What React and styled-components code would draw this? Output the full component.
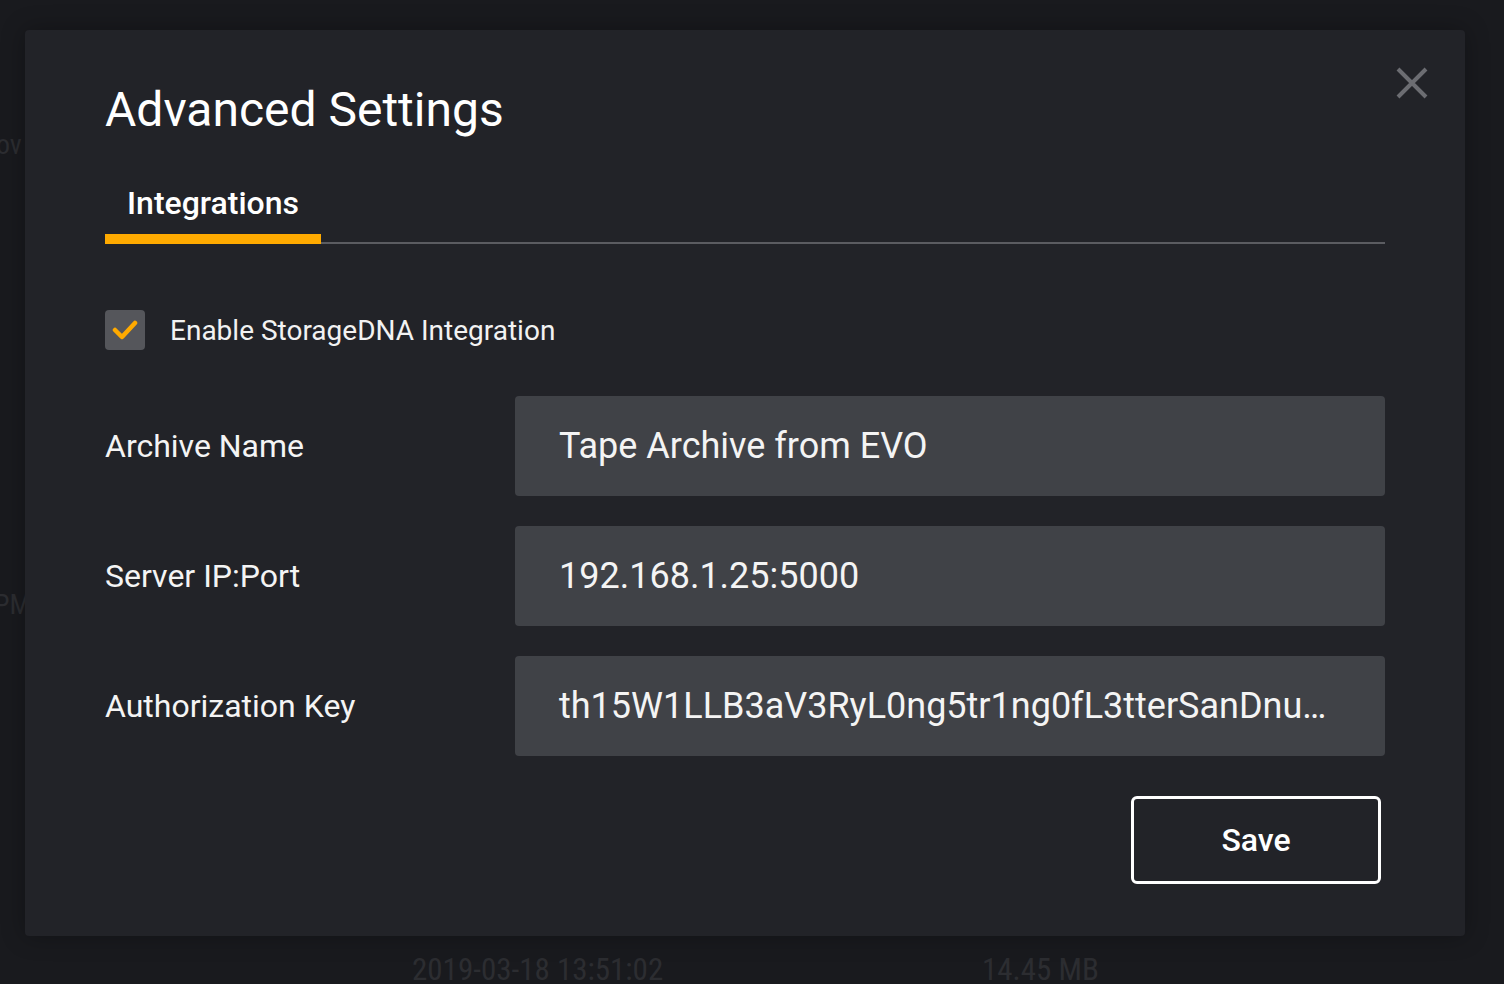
import styled, { createGlobalStyle } from "styled-components";

const Global = createGlobalStyle`
  * { box-sizing: border-box; margin: 0; padding: 0; }
  html, body { background: #191a1e; }
  body { font-family: Roboto, "Noto Sans", "Liberation Sans", sans-serif; color: #fff; }
`;

const Page = styled.div`
  position: relative;
  width: 1504px;
  height: 984px;
  overflow: hidden;
  padding: 30px 39px 48px 25px;
`;

// faint text of the page behind the dialog
const Ghost = styled.span`
  position: absolute;
  color: #2c2d31;
  font-size: ${(p) => p.size || 28}px;
  font-stretch: condensed;
  white-space: nowrap;
`;

const Modal = styled.div`
  position: relative;
  height: 100%;
  background: #222328;
  border-radius: 4px;
  padding: 52px 80px 0 80px;
  box-shadow: 0 0 24px rgba(0, 0, 0, 0.3);
`;

const Close = styled.button`
  position: absolute;
  top: 36px;
  right: 36px;
  width: 34px;
  height: 34px;
  background: none;
  border: none;
  cursor: pointer;
`;

const Title = styled.h1`
  font-size: 48px;
  font-weight: 400;
  line-height: 56px;
`;

const Tabs = styled.div`
  margin-top: 42px;
  display: flex;
  border-bottom: 2px solid #5b5c61;
`;

const Tab = styled.div`
  padding: 2px 22px 10px;
  font-size: 32px;
  font-weight: 500;
  line-height: 42px;
  border-bottom: 10px solid ${(p) => (p.active ? "#ffaa00" : "transparent")};
  margin-bottom: -2px;
`;

const CheckRow = styled.label`
  margin-top: 66px;
  display: flex;
  align-items: center;
  gap: 25px;
  font-size: 28px;
  color: #f2f2f2;
`;

const Box = styled.span`
  width: 40px;
  height: 40px;
  border-radius: 4px;
  background: #55565b;
  display: flex;
  align-items: center;
  justify-content: center;
`;

const Fields = styled.div`
  margin-top: 46px;
  display: flex;
  flex-direction: column;
  gap: 30px;
`;

const Row = styled.div`
  display: flex;
  align-items: center;
`;

const Label = styled.div`
  width: 410px;
  font-size: 32px;
  color: #f4f4f4;
`;

const Input = styled.div`
  flex: 1;
  height: 100px;
  background: #404247;
  border-radius: 4px;
  padding: 0 44px;
  display: flex;
  align-items: center;
  font-size: 36px;
  color: #f4f4f4;
  overflow: hidden;
  white-space: nowrap;
`;

const Footer = styled.div`
  margin-top: 40px;
  display: flex;
  justify-content: flex-end;
  padding-right: 4px;
`;

const SaveButton = styled.button`
  width: 250px;
  height: 88px;
  background: transparent;
  border: 3px solid #ffffff;
  border-radius: 6px;
  color: #fff;
  font-family: inherit;
  font-size: 32px;
  font-weight: 500;
  cursor: pointer;
`;

const fields = [
  { label: "Archive Name", value: "Tape Archive from EVO" },
  { label: "Server IP:Port", value: "192.168.1.25:5000" },
  { label: "Authorization Key", value: "th15W1LLB3aV3RyL0ng5tr1ng0fL3tterSanDnu…" },
];

export default function App() {
  return (
    <>
      <Global />
      <Page>
        <Ghost style={{ left: -4, top: 128 }}>ov</Ghost>
        <Ghost style={{ left: -6, top: 588 }}>PM</Ghost>
        <Ghost style={{ left: 412, top: 951 }} size={31}>2019-03-18 13:51:02</Ghost>
        <Ghost style={{ left: 982, top: 951 }} size={31}>14.45 MB</Ghost>
        <Modal>
          <Close aria-label="Close">
            <svg width="34" height="34" viewBox="0 0 34 34">
              <path d="M3 3 L31 31 M31 3 L3 31" stroke="#6c6d72" strokeWidth="4" />
            </svg>
          </Close>
          <Title>Advanced Settings</Title>
          <Tabs>
            <Tab active>Integrations</Tab>
          </Tabs>
          <CheckRow>
            <Box>
              <svg width="26" height="22" viewBox="0 0 26 22">
                <path d="M3 11 L10 18 L23 4" fill="none" stroke="#ffaa00" strokeWidth="4.5" strokeLinecap="round" strokeLinejoin="round" />
              </svg>
            </Box>
            Enable StorageDNA Integration
          </CheckRow>
          <Fields>
            {fields.map((f) => (
              <Row key={f.label}>
                <Label>{f.label}</Label>
                <Input>{f.value}</Input>
              </Row>
            ))}
          </Fields>
          <Footer>
            <SaveButton>Save</SaveButton>
          </Footer>
        </Modal>
      </Page>
    </>
  );
}
